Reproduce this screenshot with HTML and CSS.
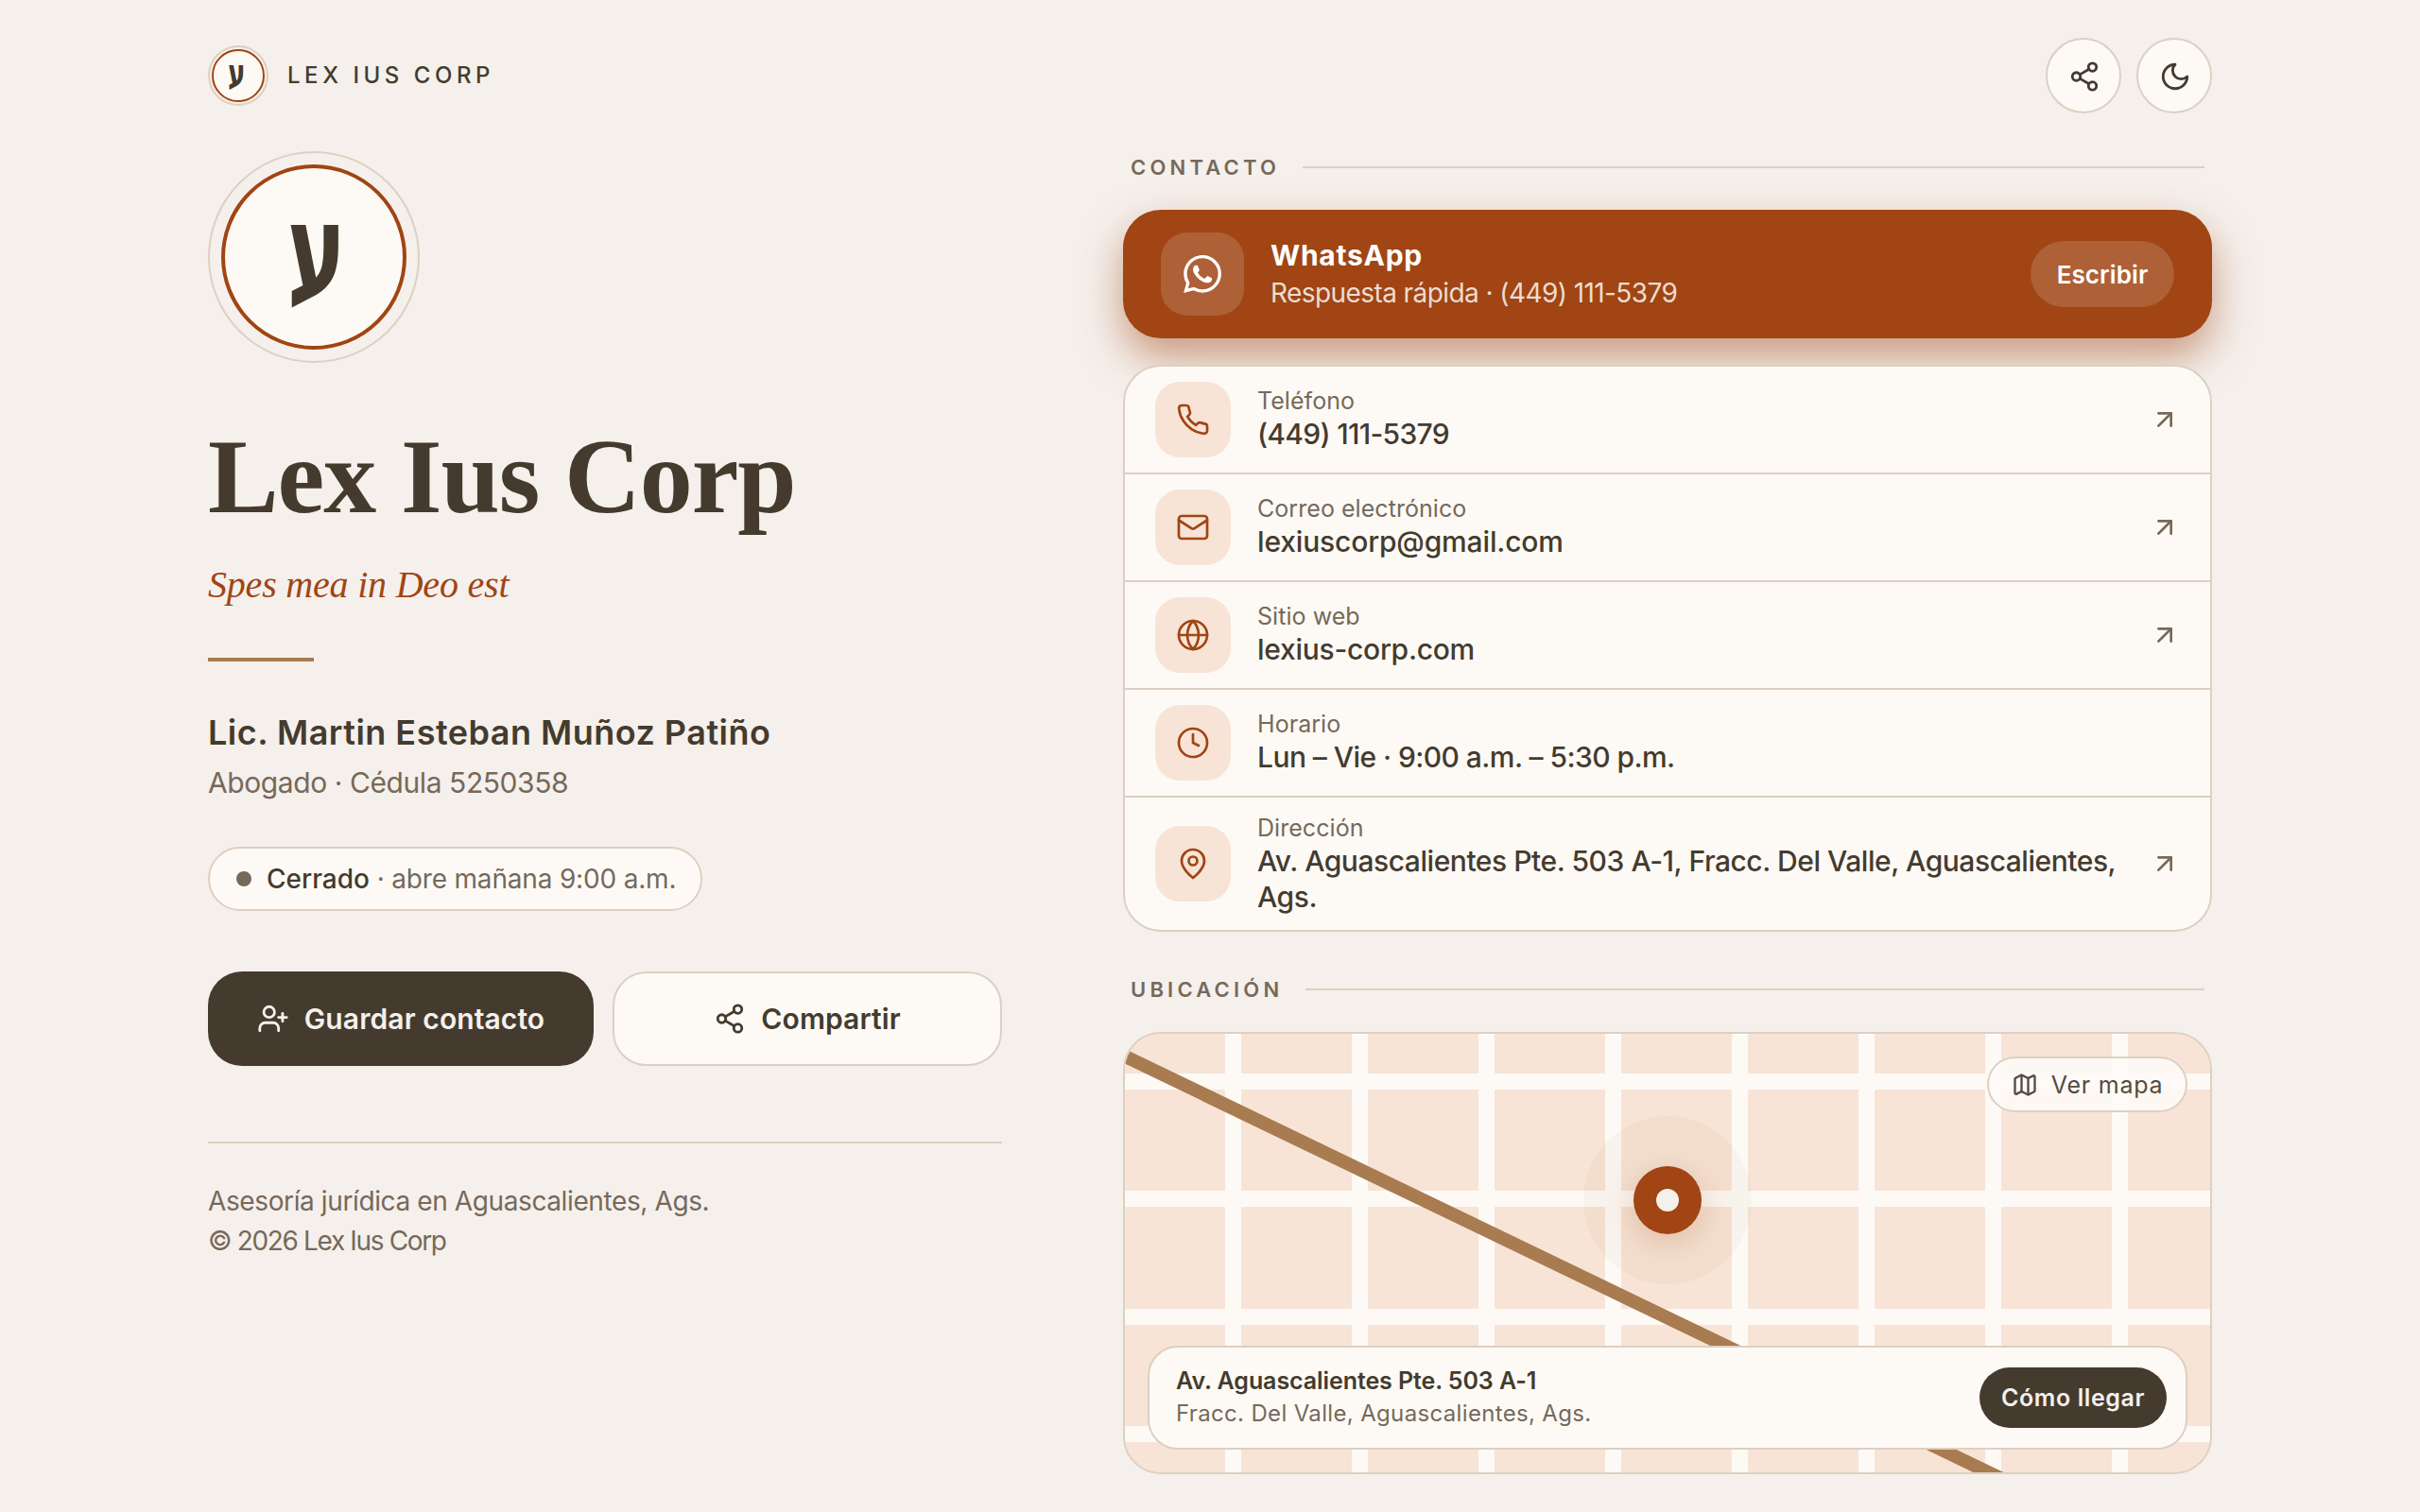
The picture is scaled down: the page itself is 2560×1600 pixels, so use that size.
FILE: index.html
```html
<!DOCTYPE html>
<html lang="es">
<head>
<meta charset="utf-8">
<title>Lex Ius Corp</title>
<link rel="stylesheet" href="styles.css">
</head>
<body>
<div class="page">
  <header class="top">
    <div class="brand">
      <span class="brand-mark" lang="he"><span class="glyph">ע</span></span>
      <span class="brand-name">LEX IUS CORP</span>
    </div>
    <div class="top-actions">
      <button class="round-btn" aria-label="Compartir">
        <svg class="ic ic-34" viewBox="-0.7 -0.7 24 24"><circle cx="18" cy="5" r="3"/><circle cx="6" cy="12" r="3"/><circle cx="18" cy="19" r="3"/><line x1="8.59" y1="13.51" x2="15.42" y2="17.49"/><line x1="15.41" y1="6.51" x2="8.59" y2="10.49"/></svg>
      </button>
      <button class="round-btn" aria-label="Tema">
        <svg class="ic ic-34" viewBox="-0.7 -0.7 24 24"><path d="M12 3a6 6 0 0 0 9 9 9 9 0 1 1-9-9Z"/></svg>
      </button>
    </div>
  </header>

  <main class="main">
    <section class="profile">
      <div class="seal" lang="he"><span class="glyph">ע</span></div>
      <h1 class="title">Lex Ius Corp</h1>
      <p class="motto">Spes mea in Deo est</p>
      <div class="rule"></div>
      <h2 class="person">Lic. Martin Esteban Muñoz Patiño</h2>
      <p class="role">Abogado · Cédula 5250358</p>
      <div class="status"><span class="dot"></span><span class="status-text"><b>Cerrado</b> · abre mañana 9:00 a.m.</span></div>
      <div class="cta">
        <a class="btn btn-dark">
          <svg class="ic ic-34" viewBox="0 0 24 24"><path d="M16 21v-2a4 4 0 0 0-4-4H6a4 4 0 0 0-4 4v2"/><circle cx="9" cy="7" r="4"/><line x1="19" y1="8" x2="19" y2="14"/><line x1="22" y1="11" x2="16" y2="11"/></svg>
          <span>Guardar contacto</span>
        </a>
        <a class="btn btn-light">
          <svg class="ic ic-34" viewBox="0 0 24 24"><circle cx="18" cy="5" r="3"/><circle cx="6" cy="12" r="3"/><circle cx="18" cy="19" r="3"/><line x1="8.59" y1="13.51" x2="15.42" y2="17.49"/><line x1="15.41" y1="6.51" x2="8.59" y2="10.49"/></svg>
          <span>Compartir</span>
        </a>
      </div>
      <footer class="foot">
        <p class="foot-line">Asesoría jurídica en Aguascalientes, Ags.</p>
        <p class="foot-copy">© 2026 Lex Ius Corp</p>
      </footer>
    </section>

    <section class="details">
      <div class="sec-title"><span>CONTACTO</span><i class="sec-line"></i></div>

      <a class="wa">
        <span class="wa-icon">
          <svg class="wa-svg" viewBox="0 0 24 24"><path d="M17.472 14.382c-.297-.149-1.758-.867-2.03-.967-.273-.099-.471-.148-.67.15-.197.297-.767.966-.94 1.164-.173.199-.347.223-.644.075-.297-.15-1.255-.463-2.39-1.475-.883-.788-1.48-1.761-1.653-2.059-.173-.297-.018-.458.13-.606.134-.133.298-.347.446-.52.149-.174.198-.298.298-.497.099-.198.05-.371-.025-.52-.075-.149-.669-1.612-.916-2.207-.242-.579-.487-.5-.669-.51-.173-.008-.371-.01-.57-.01-.198 0-.52.074-.792.372-.272.297-1.04 1.016-1.04 2.479 0 1.462 1.065 2.875 1.213 3.074.149.198 2.096 3.2 5.077 4.487.709.306 1.262.489 1.694.625.712.227 1.36.195 1.871.118.571-.085 1.758-.719 2.006-1.413.248-.694.248-1.289.173-1.413-.074-.124-.272-.198-.57-.347m-5.421 7.403h-.004a9.87 9.87 0 01-5.031-1.378l-.361-.214-3.741.982.998-3.648-.235-.374a9.86 9.86 0 01-1.51-5.26c.001-5.45 4.436-9.884 9.888-9.884 2.64 0 5.122 1.03 6.988 2.898a9.825 9.825 0 012.893 6.994c-.003 5.45-4.437 9.884-9.885 9.884m8.413-18.297A11.815 11.815 0 0012.05 0C5.495 0 .16 5.335.157 11.892c0 2.096.547 4.142 1.588 5.945L.057 24l6.305-1.654a11.882 11.882 0 005.683 1.448h.005c6.554 0 11.89-5.335 11.893-11.893a11.821 11.821 0 00-3.48-8.413Z"/></svg>
        </span>
        <span class="wa-text">
          <span class="wa-title">WhatsApp</span>
          <span class="wa-sub">Respuesta rápida · (449) 111-5379</span>
        </span>
        <span class="wa-cta">Escribir</span>
      </a>

      <div class="list">
        <a class="row">
          <span class="row-icon"><svg class="ic ic-36" viewBox="0 0 24 24"><path d="M22 16.92v3a2 2 0 0 1-2.18 2 19.79 19.79 0 0 1-8.63-3.07 19.5 19.5 0 0 1-6-6 19.79 19.79 0 0 1-3.07-8.67A2 2 0 0 1 4.11 2h3a2 2 0 0 1 2 1.72 12.84 12.84 0 0 0 .7 2.81 2 2 0 0 1-.45 2.11L8.09 9.91a16 16 0 0 0 6 6l1.27-1.27a2 2 0 0 1 2.11-.45 12.84 12.84 0 0 0 2.81.7A2 2 0 0 1 22 16.92z"/></svg></span>
          <span class="row-text"><span class="row-label">Teléfono</span><span class="row-value v-phone">(449) 111-5379</span></span>
          <svg class="ic ic-32 arrow" viewBox="0 0 24 24"><path d="M7 17 17 7"/><path d="M7 7h10v10"/></svg>
        </a>
        <a class="row">
          <span class="row-icon"><svg class="ic ic-36" viewBox="0 0 24 24"><rect x="2" y="4" width="20" height="16" rx="2"/><path d="m22 7-8.97 5.7a1.94 1.94 0 0 1-2.06 0L2 7"/></svg></span>
          <span class="row-text"><span class="row-label">Correo electrónico</span><span class="row-value v-mail">lexiuscorp@gmail.com</span></span>
          <svg class="ic ic-32 arrow" viewBox="0 0 24 24"><path d="M7 17 17 7"/><path d="M7 7h10v10"/></svg>
        </a>
        <a class="row">
          <span class="row-icon"><svg class="ic ic-36" viewBox="0 0 24 24"><circle cx="12" cy="12" r="10"/><path d="M12 2a14.5 14.5 0 0 0 0 20 14.5 14.5 0 0 0 0-20"/><path d="M2 12h20"/></svg></span>
          <span class="row-text"><span class="row-label">Sitio web</span><span class="row-value v-web">lexius-corp.com</span></span>
          <svg class="ic ic-32 arrow" viewBox="0 0 24 24"><path d="M7 17 17 7"/><path d="M7 7h10v10"/></svg>
        </a>
        <div class="row">
          <span class="row-icon"><svg class="ic ic-36" viewBox="0 0 24 24"><circle cx="12" cy="12" r="10"/><polyline points="12 6 12 12 16 14"/></svg></span>
          <span class="row-text"><span class="row-label">Horario</span><span class="row-value v-hours">Lun – Vie · 9:00 a.m. – 5:30 p.m.</span></span>
        </div>
        <a class="row">
          <span class="row-icon"><svg class="ic ic-36" viewBox="0 0 24 24"><path d="M20 10c0 6-8 12-8 12s-8-6-8-12a8 8 0 0 1 16 0Z"/><circle cx="12" cy="10" r="3"/></svg></span>
          <span class="row-text"><span class="row-label">Dirección</span><span class="row-value v-addr">Av. Aguascalientes Pte. 503 A-1, Fracc. Del Valle, Aguascalientes, Ags.</span></span>
          <svg class="ic ic-32 arrow" viewBox="0 0 24 24"><path d="M7 17 17 7"/><path d="M7 7h10v10"/></svg>
        </a>
      </div>

      <div class="sec-title sec-second"><span>UBICACIÓN</span><i class="sec-line"></i></div>

      <div class="map">
        <svg class="map-art" viewBox="0 0 1148 464">
          <rect class="tile" width="1148" height="464"/>
          <g class="street">
            <rect x="106" width="17" height="464"/><rect x="240" width="17" height="464"/><rect x="374" width="17" height="464"/><rect x="508" width="17" height="464"/><rect x="642" width="17" height="464"/><rect x="776" width="17" height="464"/><rect x="910" width="17" height="464"/><rect x="1044" width="17" height="464"/>
            <rect y="42" width="1148" height="17"/><rect y="166" width="1148" height="17"/><rect y="291" width="1148" height="17"/><rect y="415" width="1148" height="17"/>
          </g>
          <line class="avenue" x1="-10" y1="19" x2="930" y2="472"/>
        </svg>
        <span class="halo"></span>
        <span class="pin"><i class="pin-eye"></i></span>
        <a class="see-map">
          <svg class="ic ic-28" viewBox="0 0 24 24"><path d="M14.106 5.553a2 2 0 0 0 1.788 0l3.659-1.83A1 1 0 0 1 21 4.619v12.764a1 1 0 0 1-.553.894l-4.553 2.277a2 2 0 0 1-1.788 0l-4.212-2.106a2 2 0 0 0-1.788 0l-3.659 1.83A1 1 0 0 1 3 19.381V6.618a1 1 0 0 1 .553-.894l4.553-2.277a2 2 0 0 1 1.788 0z"/><path d="M15 5.764v15"/><path d="M9 3.236v15"/></svg>
          <span class="see-text">Ver mapa</span>
        </a>
        <div class="addr">
          <div class="addr-text">
            <div class="addr-main">Av. Aguascalientes Pte. 503 A-1</div>
            <div class="addr-sub">Fracc. Del Valle, Aguascalientes, Ags.</div>
          </div>
          <a class="go">Cómo llegar</a>
        </div>
      </div>
    </section>
  </main>
</div>
</body>
</html>
```

FILE: styles.css
```css
* { box-sizing: border-box; }
html, body { margin: 0; padding: 0; }
body {
  background: #f5f0ec;
  color: #443b2e;
  font-family: Inter, "Noto Sans", sans-serif;
}
p, h1, h2 { margin: 0; font-weight: inherit; }
a { color: inherit; text-decoration: none; }
.page { width: 2560px; height: 1600px; padding: 40px 220px; overflow: hidden; }

.ic { fill: none; stroke: currentColor; stroke-width: 2; stroke-linecap: round; stroke-linejoin: round; flex: none; display: block; }
.ic-28 { width: 28px; height: 28px; }
.ic-32 { width: 32px; height: 32px; }
.ic-34 { width: 34px; height: 34px; }
.ic-36 { width: 36px; height: 36px; stroke-width: 1.8; }

.glyph { display: inline-block; transform: scaleX(.7); }

.top { display: flex; justify-content: space-between; align-items: center; height: 80px; margin-bottom: 40px; }
.brand { display: flex; align-items: center; gap: 24px; padding-left: 4px; }
.brand-mark {
  width: 56px; height: 56px; border-radius: 50%; padding: 0 3px 6px 0;
  background: #fdfaf6; border: 2px solid #a04513;
  box-shadow: 0 0 0 2px #f5f0ec, 0 0 0 4px #ddd0c0;
  display: flex; align-items: center; justify-content: center;
  font: 700 40px/1 "DejaVu Sans", sans-serif; color: #443b2e;
}
.brand-name { font-size: 24px; font-weight: 500; letter-spacing: 4.55px; line-height: 32px; }
.top-actions { display: flex; gap: 16px; }
.round-btn {
  width: 80px; height: 80px; border-radius: 50%; padding: 0;
  background: #fdfaf6; border: 2px solid #ddd0c0; color: #443b2e;
  display: flex; align-items: center; justify-content: center;
}

.main { display: grid; grid-template-columns: 840px 1152px; column-gap: 128px; align-items: start; }

.seal {
  width: 196px; height: 196px; margin: 14px 0 0 14px; border-radius: 50%; padding: 0 0 13px 6px;
  background: #fdfaf6; border: 4px solid #a04513;
  box-shadow: 0 0 0 12px #f5f0ec, 0 0 0 14px #ddd0c0;
  display: flex; align-items: center; justify-content: center;
  font: 700 135px/1 "DejaVu Sans", sans-serif; color: #443b2e;
}
.title { margin-top: 69px; font: 700 112px/130px "Liberation Serif", serif; letter-spacing: -1.1px; color: #443b2e; }
.motto { margin-top: 25px; font: italic 400 40px/50px "Liberation Serif", serif; letter-spacing: -.2px; color: #a04513; }
.rule { margin-top: 52px; width: 112px; height: 4px; background: #a87b50; }
.person { margin-top: 49px; font-size: 36px; line-height: 52px; font-weight: 600; letter-spacing: .48px; }
.role { margin-top: 5px; font-size: 30px; line-height: 44px; letter-spacing: -.42px; color: #75695a; }
.status {
  margin-top: 46px; width: 523px; height: 68px; padding-left: 28px;
  display: flex; align-items: center; gap: 16px;
  background: #fdfaf6; border: 2px solid #ddd0c0; border-radius: 34px;
}
.dot { width: 16px; height: 16px; border-radius: 50%; background: #75695a; flex: none; }
.status-text { font-size: 28px; color: #75695a; white-space: nowrap; letter-spacing: -.18px; }
.status-text b { font-weight: 500; color: #443b2e; letter-spacing: 0; }
.cta { margin-top: 64px; display: grid; grid-template-columns: 408px 412px; column-gap: 20px; padding-bottom: 80px; border-bottom: 2px solid #ddd0c0; }
.btn {
  height: 100px; border-radius: 36px; display: flex; align-items: center; justify-content: center; gap: 16px;
  font-size: 30px; font-weight: 600; white-space: nowrap; letter-spacing: .1px;
}
.btn-dark { background: #443b2e; color: #f5f0ec; }
.btn-light { background: #fdfaf6; border: 2px solid #ddd0c0; color: #443b2e; }
.foot { margin-top: 40px; font-size: 28px; line-height: 42px; color: #75695a; }
.foot-line { letter-spacing: -.39px; }
.foot-copy { letter-spacing: -1.35px; }

.sec-title { display: flex; align-items: center; height: 34px; padding: 0 8px; gap: 24px; margin-bottom: 28px; color: #75695a; }
.sec-title span { font-size: 22px; font-weight: 600; letter-spacing: 4.2px; white-space: nowrap; }
.sec-line { flex: 1; height: 2px; background: #ddd0c0; }
.sec-second { margin-top: 44px; }

.wa {
  height: 136px; padding: 0 40px; border-radius: 40px; background: #a04513; color: #fff;
  display: flex; align-items: center; gap: 28px;
  box-shadow: 0 20px 44px rgba(160, 69, 19, .5);
}
.wa-icon { width: 88px; height: 88px; border-radius: 28px; background: rgba(255,255,255,.15); display: flex; align-items: center; justify-content: center; flex: none; }
.wa-svg { width: 40px; height: 40px; fill: #fff; display: block; }
.wa-text { flex: 1; display: flex; flex-direction: column; }
.wa-title { font-size: 30px; font-weight: 700; line-height: 40px; letter-spacing: .75px; }
.wa-sub { font-size: 28px; line-height: 40px; letter-spacing: -.58px; color: rgba(255,255,255,.82); }
.wa-cta { width: 152px; height: 70px; border-radius: 35px; background: rgba(255,255,255,.15); display: flex; align-items: center; justify-content: center; font-size: 26px; font-weight: 600; letter-spacing: .1px; }

.list { margin-top: 28px; border: 2px solid #ddd0c0; border-radius: 40px; background: #fdfaf6; overflow: hidden; }
.row { display: flex; align-items: center; gap: 28px; padding: 16px 32px; border-bottom: 2px solid #ddd0c0; }
.row:last-child { border-bottom: 0; }
.row-icon { width: 80px; height: 80px; border-radius: 26px; background: #f7e4d6; color: #a04513; display: flex; align-items: center; justify-content: center; flex: none; }
.row-text { flex: 1; display: flex; flex-direction: column; margin-bottom: 3px; }
.row:last-child .row-text { margin-bottom: 0; }
.row-label { font-size: 25px; line-height: 32px; letter-spacing: .05px; color: #75695a; }
.row-value { font-size: 30px; line-height: 38px; font-weight: 500; }
.v-phone { letter-spacing: -.7px; }
.v-mail { letter-spacing: -.16px; }
.v-web { letter-spacing: -.27px; }
.v-hours { letter-spacing: -.56px; }
.v-addr { letter-spacing: -.46px; }
.arrow { color: #75695a; }

.map { position: relative; height: 468px; border: 2px solid #ddd0c0; border-radius: 40px; overflow: hidden; }
.map-art { display: block; width: 1148px; height: 464px; }
.tile { fill: #f7e4d6; }
.street rect { fill: #fdfaf6; }
.avenue { stroke: #a87b50; stroke-width: 14; }
.halo { position: absolute; left: 485px; top: 87px; width: 178px; height: 178px; border-radius: 50%; background: rgba(160,69,19,.04); }
.pin {
  position: absolute; left: 538px; top: 140px; width: 72px; height: 72px; border-radius: 50%;
  background: #a04513; display: flex; align-items: center; justify-content: center;
  box-shadow: 0 8px 32px rgba(160,69,19,.22);
}
.pin-eye { width: 24px; height: 24px; border-radius: 50%; background: #f5f0ec; }
.see-map {
  position: absolute; right: 24px; top: 24px; width: 212px; height: 59px; border-radius: 30px;
  background: rgba(253,250,246,.92); border: 2px solid #ddd0c0; color: #554b3e;
  display: flex; align-items: center; justify-content: center; gap: 14px;
}
.see-text { font-size: 25px; letter-spacing: .75px; }
.addr {
  position: absolute; left: 24px; right: 24px; bottom: 24px; height: 110px; padding: 0 20px 0 28px;
  background: #fdfaf6; border: 2px solid #ddd0c0; border-radius: 32px;
  display: flex; align-items: center; justify-content: space-between;
}
.addr-main { font-size: 25px; font-weight: 600; line-height: 34px; letter-spacing: -.08px; }
.addr-sub { font-size: 24px; line-height: 36px; letter-spacing: .34px; color: #75695a; }
.go { width: 198px; height: 64px; border-radius: 32px; background: #443b2e; color: #f5f0ec; display: flex; align-items: center; justify-content: center; font-size: 25px; font-weight: 600; letter-spacing: .6px; }
```
